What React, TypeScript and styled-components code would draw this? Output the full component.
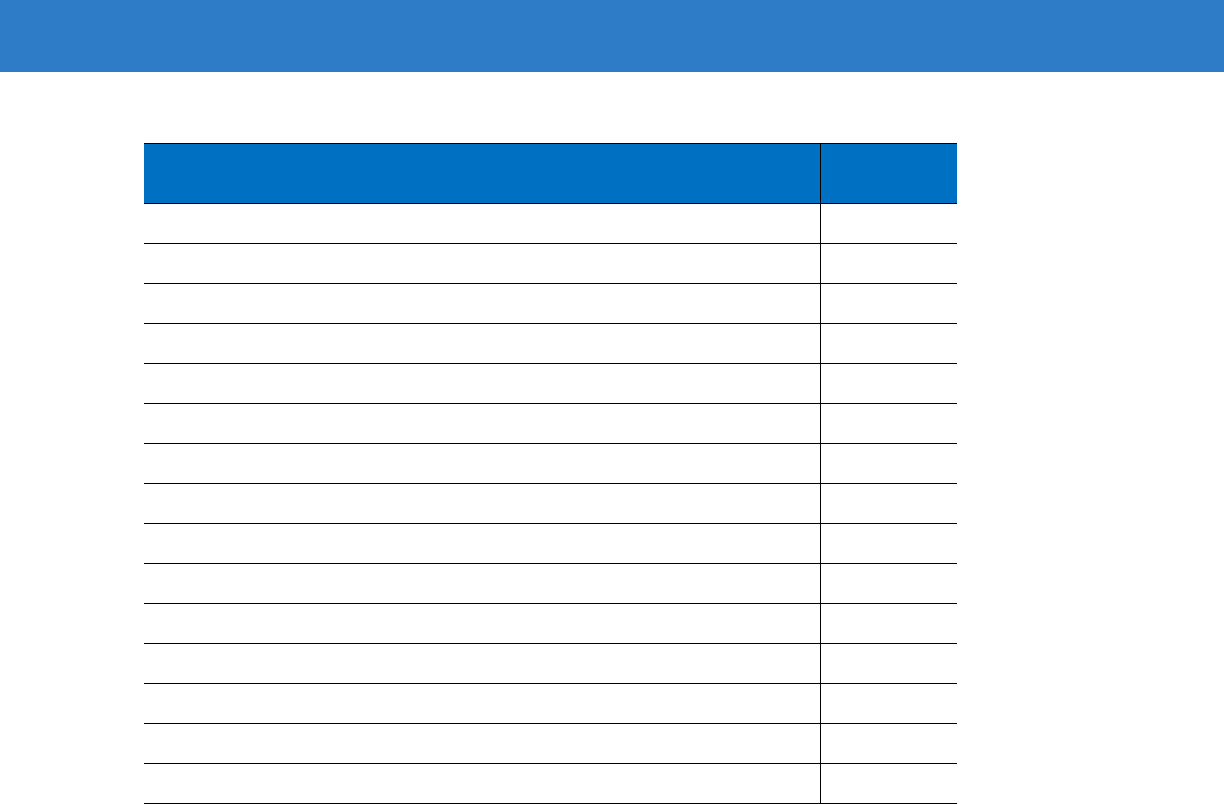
import styled, { createGlobalStyle } from 'styled-components';

const GlobalStyle = createGlobalStyle`
	html, body {
		margin: 0;
		padding: 0;
		background: #fff;
		font-family: 'Liberation Sans', Arial, sans-serif;
	}
`;

const TopBar = styled.header`
	height: 72px;
	background-color: #2e7bc8;
`;

const Table = styled.div`
	width: 813px;
	margin: 71px 0 0 144px;
	border-top: 1px solid #000;
`;

const Row = styled.div<{ $head?: boolean }>`
	display: grid;
	grid-template-columns: 676px 137px;
	box-sizing: border-box;
	height: ${(p) => (p.$head ? '60px' : '40px')};
	border-bottom: 1px solid #000;
	background-color: ${(p) => (p.$head ? '#0071c2' : 'transparent')};
	color: ${(p) => (p.$head ? '#fff' : '#000')};
	font-size: 14px;
`;

const Cell = styled.div<{ $last?: boolean }>`
	display: flex;
	align-items: center;
	padding: 0 8px;
	border-left: ${(p) => (p.$last ? '1px solid #000' : 'none')};
`;

const rows = Array.from({ length: 15 }, (_, i) => i);

export default function App() {
	return (
		<>
			<GlobalStyle />
			<TopBar />
			<Table>
				<Row $head>
					<Cell />
					<Cell $last />
				</Row>
				{rows.map((i) => (
					<Row key={i}>
						<Cell />
						<Cell $last />
					</Row>
				))}
			</Table>
		</>
	);
}
